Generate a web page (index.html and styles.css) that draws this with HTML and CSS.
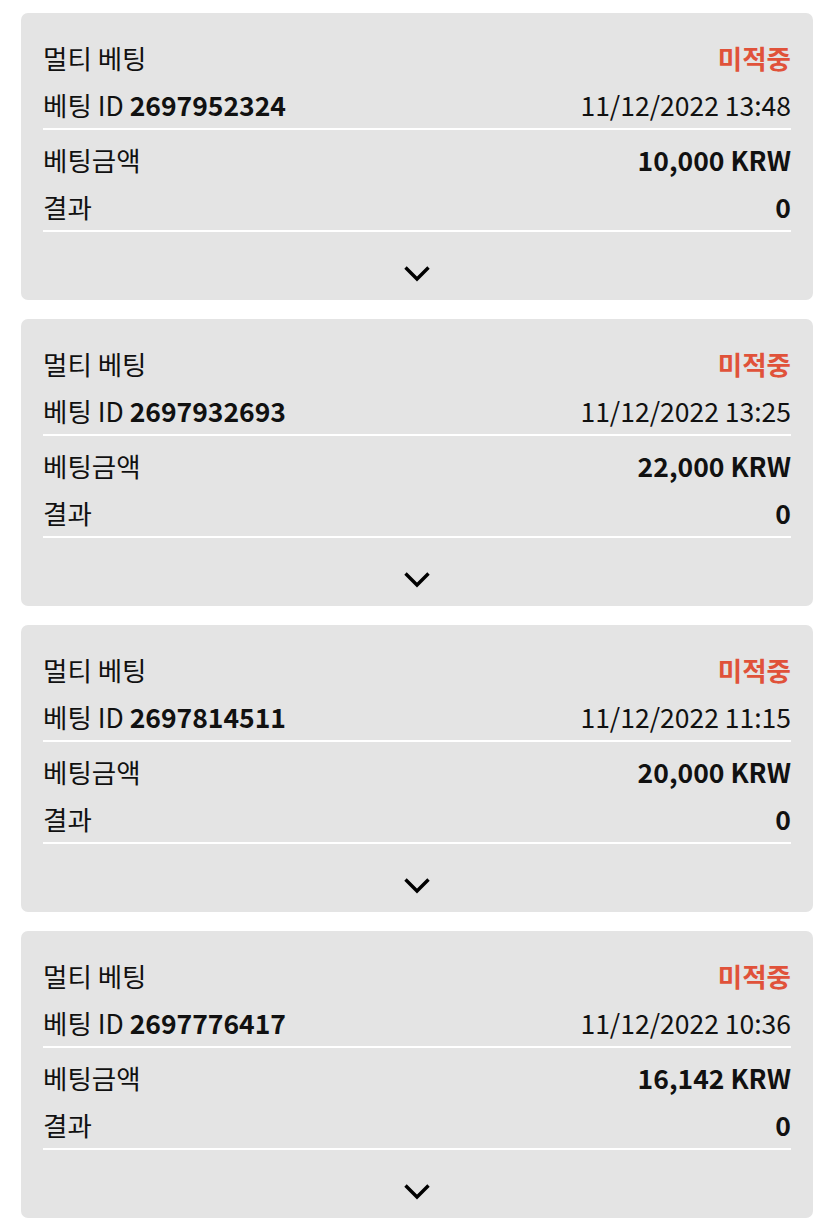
FILE: index.html
```
<!DOCTYPE html>
<html>
<head>
	<title>베팅 내역</title>
	<meta name="viewport" content="width=device-width, initial-scale=1" />
	<link rel="stylesheet" href="styles.css">
</head>
<body>
	<div class="bet-list">
		<div class="bet-card">
			<div class="bet-head">
				<div class="row"><span>멀티 베팅</span><span class="status">미적중</span></div>
				<div class="row"><span>베팅 ID <b>2697952324</b></span><span>11/12/2022 13:48</span></div>
			</div>
			<div class="bet-body">
				<div class="row"><span>베팅금액</span><b>10,000 KRW</b></div>
				<div class="row"><span>결과</span><b>0</b></div>
			</div>
			<div class="bet-toggle">
				<svg width="28" height="17" viewBox="0 0 28 17"><polyline points="2.5,2.5 14,14 25.5,2.5" fill="none" stroke="#000" stroke-width="3.4"/></svg>
			</div>
		</div>
		<div class="bet-card">
			<div class="bet-head">
				<div class="row"><span>멀티 베팅</span><span class="status">미적중</span></div>
				<div class="row"><span>베팅 ID <b>2697932693</b></span><span>11/12/2022 13:25</span></div>
			</div>
			<div class="bet-body">
				<div class="row"><span>베팅금액</span><b>22,000 KRW</b></div>
				<div class="row"><span>결과</span><b>0</b></div>
			</div>
			<div class="bet-toggle">
				<svg width="28" height="17" viewBox="0 0 28 17"><polyline points="2.5,2.5 14,14 25.5,2.5" fill="none" stroke="#000" stroke-width="3.4"/></svg>
			</div>
		</div>
		<div class="bet-card">
			<div class="bet-head">
				<div class="row"><span>멀티 베팅</span><span class="status">미적중</span></div>
				<div class="row"><span>베팅 ID <b>2697814511</b></span><span>11/12/2022 11:15</span></div>
			</div>
			<div class="bet-body">
				<div class="row"><span>베팅금액</span><b>20,000 KRW</b></div>
				<div class="row"><span>결과</span><b>0</b></div>
			</div>
			<div class="bet-toggle">
				<svg width="28" height="17" viewBox="0 0 28 17"><polyline points="2.5,2.5 14,14 25.5,2.5" fill="none" stroke="#000" stroke-width="3.4"/></svg>
			</div>
		</div>
		<div class="bet-card">
			<div class="bet-head">
				<div class="row"><span>멀티 베팅</span><span class="status">미적중</span></div>
				<div class="row"><span>베팅 ID <b>2697776417</b></span><span>11/12/2022 10:36</span></div>
			</div>
			<div class="bet-body">
				<div class="row"><span>베팅금액</span><b>16,142 KRW</b></div>
				<div class="row"><span>결과</span><b>0</b></div>
			</div>
			<div class="bet-toggle">
				<svg width="28" height="17" viewBox="0 0 28 17"><polyline points="2.5,2.5 14,14 25.5,2.5" fill="none" stroke="#000" stroke-width="3.4"/></svg>
			</div>
		</div>
	</div>
</body>
</html>
```

FILE: styles.css
```
	body {
		margin: 0;
		background-color: #FFFFFF;
		font-family: "Noto Sans CJK KR", "Noto Sans", sans-serif;
		color: #111111;
	}

	.bet-list {
		display: flex;
		flex-direction: column;
		gap: 19px;
		padding: 13px 22px 0 21px;
	}

	.bet-card {
		background-color: #e4e4e4;
		border-radius: 7px;
		height: 287px;
		padding: 0 22px;
		box-sizing: border-box;
	}

	.row {
		display: flex;
		justify-content: space-between;
		align-items: center;
		height: 47px;
		font-size: 26.5px;
	}

	.row b {
		font-weight: 700;
	}

	.bet-head {
		padding-top: 21px;
		border-bottom: 2px solid #FFFFFF;
	}

	.bet-body {
		padding-top: 6px;
		border-bottom: 2px solid #FFFFFF;
	}

	.status {
		color: #e0523a;
		font-weight: 700;
	}

	.bet-toggle {
		display: flex;
		justify-content: center;
		padding-top: 33px;
	}
```
